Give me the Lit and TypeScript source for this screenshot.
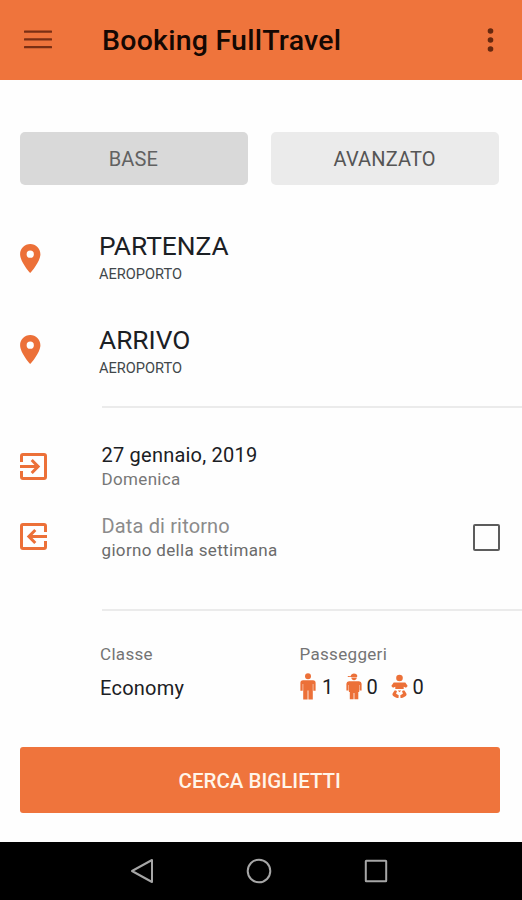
import { LitElement, html, css, svg } from "lit";
import { customElement } from "lit/decorators.js";

const pin = svg`<path d="M12 2C8.13 2 5 5.13 5 9c0 5.25 7 13 7 13s7-7.75 7-13c0-3.87-3.13-7-7-7zm0 9.5a2.5 2.5 0 1 1 0-5 2.5 2.5 0 0 1 0 5z"/>`;
const boxArrow = "M10.09 15.59 11.5 17l5-5-5-5-1.41 1.41L12.67 11H3v2h9.67l-2.58 2.59zM19 3H5a2 2 0 0 0-2 2v4h2V5h14v14H5v-4H3v4a2 2 0 0 0 2 2h14a2 2 0 0 0 2-2V5a2 2 0 0 0-2-2z";

@customElement("app-root")
export class AppRoot extends LitElement {
  static styles = css`
    :host {
      display: flex;
      flex-direction: column;
      width: 522px;
      height: 900px;
      overflow: hidden;
      background: #fefefe;
      color: #1b2024;
      font-family: Roboto, "Liberation Sans", sans-serif;
    }
    * { box-sizing: border-box; }
    svg { display: block; flex: none; }
    .bar {
      display: flex;
      align-items: center;
      height: 80px;
      flex: none;
      padding: 0 28.5px 0 23.5px;
      background: #ef743c;
    }
    .title {
      flex: 1;
      margin: 2px 0 0 50.5px;
      font-size: 28.5px;
      line-height: 34px;
      font-weight: 500;
      letter-spacing: 0.24px;
      color: #140803;
      white-space: nowrap;
    }
    .main { flex: 1; display: flex; flex-direction: column; }
    .tabs {
      display: grid;
      grid-template-columns: 1fr 1fr;
      gap: 23.5px;
      margin: 52px 23px 0 20px;
    }
    .tab {
      height: 52.5px;
      border-radius: 5px;
      background: #ebebeb;
      color: #555;
      font-size: 20px;
      letter-spacing: 0.15px;
      line-height: 54px;
      text-align: center;
      padding-right: 1px;
    }
    .tab.on { background: #d9d9d9; color: #616161; }
    .orange { fill: #ec7038; }
    .places { margin: 46.5px 0 0 20px; height: 175px; }
    .place {
      display: grid;
      grid-template-columns: 79px 1fr;
      height: 93.5px;
    }
    .place .pin { margin-top: 13px; }
    .place:last-child .pin { margin-top: 10.5px; }
    .name { font-size: 26.3px; line-height: 30px; }
    .sub { font-size: 14.6px; line-height: 20px; margin-top: 3px; color: #41474a; }
    .line { height: 2px; margin-left: 102px; background: #ebebeb; flex: none; }
    .dates { height: 200.5px; padding: 34.5px 22.5px 0 20px; }
    .date {
      display: grid;
      grid-template-columns: 81.5px 1fr auto;
      height: 71px;
    }
    .ico { margin-top: 10.5px; }
    .date:last-child .ico { margin-top: 9px; }
    .day { font-size: 20px; line-height: 24px; letter-spacing: 0.22px; }
    .week { font-size: 17px; line-height: 20px; margin-top: 2px; letter-spacing: 0.34px; color: #777; }
    .muted { color: #8b8b8b; letter-spacing: 0.15px; }
    .dark { color: #6b6b6b; }
    .check {
      width: 26.5px;
      height: 26.5px;
      margin-top: 10.5px;
      border: 2.5px solid #5c5c5c;
      border-radius: 2px;
    }
    .opts {
      display: grid;
      grid-template-columns: 199.5px 1fr;
      margin: 33px 0 0 100px;
    }
    .label { font-size: 17px; line-height: 20px; letter-spacing: 0.32px; color: #747474; }
    .value { font-size: 20px; line-height: 24px; letter-spacing: 0.25px; margin-top: 12px; }
    .pax { display: flex; align-items: center; height: 27px; margin-top: 9px; font-size: 20px; line-height: 24px; }
    .n { width: 12px; margin: 2px 0 0 6.5px; }
    .kid { margin-left: 11.5px; }
    .baby { margin-left: 12px; }
    .kid + .n, .baby + .n { margin-left: 5px; }
    .go {
      height: 66px;
      margin: 47px 22.5px 0 20px;
      border-radius: 3px;
      background: #ef743c;
      color: #fff5ea;
      font-size: 20.5px;
      font-weight: 500;
      line-height: 68px;
      text-align: center;
      flex: none;
    }
    .nav {
      display: flex;
      align-items: center;
      justify-content: center;
      gap: 92px;
      height: 58px;
      flex: none;
      padding-right: 4px;
      background: #000;
    }
    .stroke { fill: none; stroke: #a6a6a6; stroke-width: 2; stroke-linejoin: round; }
  `;

  private place(name: string) {
    return html`<div class="place">
      <svg class="pin orange" width="20.5" height="29" viewBox="5 2 14 20">${pin}</svg>
      <div><div class="name">${name}</div><div class="sub">AEROPORTO</div></div>
    </div>`;
  }

  render() {
    return html`
      <header class="bar">
        <svg width="28" height="20" viewBox="0 0 28 20" fill="#7a2f14">
          <rect y="0.4" width="28" height="2.3" rx=".5"/><rect y="8.2" width="28" height="2.3" rx=".5"/><rect y="16" width="28" height="2.3" rx=".5"/>
        </svg>
        <div class="title">Booking FullTravel</div>
        <svg width="7" height="24" viewBox="0 0 7 24" fill="#66280f">
          <circle cx="3.5" cy="3" r="2.8"/><circle cx="3.5" cy="12" r="2.8"/><circle cx="3.5" cy="21" r="2.8"/>
        </svg>
      </header>
      <main class="main">
        <div class="tabs"><div class="tab on">BASE</div><div class="tab">AVANZATO</div></div>
        <div class="places">${this.place("PARTENZA")}${this.place("ARRIVO")}</div>
        <div class="line"></div>
        <div class="dates">
          <div class="date">
            <svg class="ico orange" width="27" height="27" viewBox="3 3 18 18"><path d=${boxArrow}/></svg>
            <div><div class="day">27 gennaio, 2019</div><div class="week">Domenica</div></div>
          </div>
          <div class="date">
            <svg class="ico orange" width="27" height="27" viewBox="3 3 18 18"><path transform="matrix(-1 0 0 1 24 0)" d=${boxArrow}/></svg>
            <div><div class="day muted">Data di ritorno</div><div class="week dark">giorno della settimana</div></div>
            <div class="check"></div>
          </div>
        </div>
        <div class="line"></div>
        <div class="opts">
          <div><div class="label">Classe</div><div class="value">Economy</div></div>
          <div>
            <div class="label">Passeggeri</div>
            <div class="pax">
              <svg class="orange" width="16" height="27" viewBox="0 0 16 27">
                <circle cx="8" cy="3.3" r="3"/>
                <path d="M3 7.2h10a2.6 2.6 0 0 1 2.600 2.600v8h-2.300v-6.800h-.5V26.400H8.400v-9h-.8v9H3.200V11h-.5v6.800H.4v-8A2.600 2.600 0 0 1 3 7.200z"/>
              </svg>
              <span class="n">1</span>
              <svg class="orange kid" width="16" height="27" viewBox="0 0 16 27">
                <path d="M4.600 3.300C5 1.500 6.400.6 8 .6s2.900.9 3.300 2.200l-.2 1.100H1.800v-.9z"/>
                <path d="M5.300 4.600h5.500c-.2 1.700-1.300 2.700-2.800 2.700s-2.500-1-2.700-2.700z"/>
                <path d="M3 8.300h10a2.600 2.600 0 0 1 2.600 2.500v6.800h-2v-5.500h-.4V19h-.9v7.200H8.400V20h-.8v6.200H3.800V19h-.9v-6.900h-.4v5.500H.4v-6.800A2.600 2.600 0 0 1 3 8.300z"/>
              </svg>
              <span class="n">0</span>
              <svg class="orange baby" width="17" height="25" viewBox="0 0 17 25">
                <circle cx="8.500" cy="4" r="3.300"/>
                <path d="M2.700 8.600h11.600l2.400 3.400-1.700 1.800-2.300-1.100v2.400H4.300v-2.400L2 13.800.3 12z"/>
                <path d="M3.900 16.200 6 17.100l-.9 2.600 2.600 1.500-.2 2.900C4.600 24 1.500 21.800 1.400 20.400c0-.8 1.400-3.100 2.500-4.200zM13.100 16.200l-2.100.9.900 2.600-2.600 1.500.2 2.900c2.900-.1 6-2.300 6.100-3.700 0-.8-1.400-3.100-2.500-4.200zM6.800 16.400h3.400L8.500 18.300z"/>
              </svg>
              <span class="n">0</span>
            </div>
          </div>
        </div>
        <div class="go">CERCA BIGLIETTI</div>
      </main>
      <footer class="nav">
        <svg class="stroke" width="24" height="26" viewBox="0 0 24 26"><path d="M22 2v22L2 13z"/></svg>
        <svg class="stroke" width="26" height="26" viewBox="0 0 26 26"><circle cx="13" cy="13" r="11.300"/></svg>
        <svg class="stroke" width="24" height="24" viewBox="0 0 24 24"><rect x="1.800" y="1.800" width="20.400" height="20.400" rx=".5"/></svg>
      </footer>
    `;
  }
}
